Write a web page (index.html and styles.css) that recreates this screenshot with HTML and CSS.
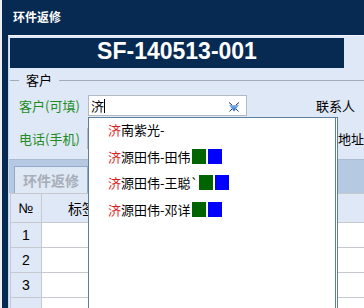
FILE: index.html
```html
<html>
	<head>
		<title>环件返修</title>
		<link rel="stylesheet" href="styles.css">
	</head>
	<body>
		<div id="window">
			<div class="titlebar">环件返修</div>
			<div class="panel">
				<div class="docno">SF-140513-001</div>
				<div class="group">
					<div class="legend"><span>客户</span></div>
					<div class="field-row">
						<label class="req">客户(可填)</label>
						<div class="combo">
							<span class="value">济</span><span class="caret"></span>
							<svg class="clear" width="12" height="10" viewBox="0 0 12 10">
								<defs>
									<linearGradient id="blue" x1="0" y1="0" x2="0" y2="1">
										<stop offset="0" stop-color="#8cbcf4" />
										<stop offset="1" stop-color="#1c58c4" />
									</linearGradient>
								</defs>
								<polygon points="1,3 11,3 6,9.5" fill="url(#blue)" />
								<path d="M1 0.5 L4 3 M11 0.5 L8 3 M1.5 9.5 L4 7 M10.5 9.5 L8 7" stroke="#24344c" stroke-width="1" />
							</svg>
						</div>
						<label class="side">联系人</label>
					</div>
					<div class="field-row">
						<label class="req">电话(手机)</label>
						<div class="combo plain"></div>
						<label class="side addr"><i class="bar"></i>地址</label>
					</div>
				</div>
				<div class="tabstrip">
					<div class="tab">环件返修</div>
				</div>
				<table class="grid">
					<tr>
						<th class="num">№</th>
						<th class="tag">标签</th>
						<th></th>
					</tr>
					<tr><td class="num">1</td><td></td><td></td></tr>
					<tr><td class="num">2</td><td></td><td></td></tr>
					<tr><td class="num">3</td><td></td><td></td></tr>
					<tr><td class="num"></td><td></td><td></td></tr>
				</table>
			</div>
		</div>
		<ul class="suggest">
			<li><em>济</em>南紫光-</li>
			<li><em>济</em>源田伟-田伟<span class="sw green"></span><span class="sw blue"></span></li>
			<li><em>济</em>源田伟-王聪`<span class="sw green"></span><span class="sw blue"></span></li>
			<li><em>济</em>源田伟-邓详<span class="sw green"></span><span class="sw blue"></span></li>
		</ul>
	</body>
</html>
```

FILE: styles.css
```css
body {
	margin: 0;
	position: relative;
	height: 308px;
	overflow: hidden;
	background: #eef0f3;
	font: 13px "Noto Sans CJK SC", "Liberation Sans", sans-serif;
	color: #000;
}
#window {
	margin-left: 2px;
	height: 308px;
	background: #072a52;
	overflow: hidden;
}
.titlebar {
	height: 35px;
	line-height: 34px;
	padding-left: 11px;
	color: #fff;
	font-weight: bold;
	font-size: 12px;
}
.panel {
	margin-left: 6px;
	height: 273px;
	border-left: 1px solid #c9d6e8;
	border-top: 1px solid #f2f6fc;
	background: #dfe8f6;
	padding-top: 2px;
	box-sizing: border-box;
}
.docno {
	margin-left: 1px;
	width: 334px;
	height: 30px;
	line-height: 30px;
	background: #072a52;
	color: #fff;
	text-align: center;
	font: bold 23px "Liberation Sans", sans-serif;
}
.group {
	margin-top: 4px;
	padding-bottom: 10px;
}
.legend {
	display: flex;
	align-items: center;
	height: 16px;
	margin-left: 1px;
}
.legend::before,
.legend::after {
	content: "";
	height: 1px;
	background: #a3adb9;
}
.legend::before {
	width: 9px;
}
.legend::after {
	flex: 1;
}
.legend span {
	padding: 0 7px;
	line-height: 16px;
}
.field-row {
	display: flex;
	align-items: center;
	height: 21px;
	padding-left: 10px;
	margin-top: 7px;
	white-space: nowrap;
}
.field-row + .field-row {
	margin-top: 12px;
}
.req {
	width: 69px;
	color: #1e8c1e;
	line-height: 21px;
}
.combo {
	display: flex;
	align-items: center;
	width: 159px;
	height: 21px;
	box-sizing: border-box;
	border: 1px solid #b4b8c0;
	background: #fff;
	padding-left: 2px;
}
.combo .value {
	line-height: 18px;
}
.caret {
	width: 1px;
	height: 14px;
	background: #000;
}
.clear {
	margin-left: auto;
	margin-right: 6px;
	margin-top: 3px;
}
.side {
	margin-left: 69px;
	line-height: 21px;
}
.addr {
	margin-left: 92px;
	display: flex;
	align-items: center;
}
.bar {
	width: 1px;
	height: 13px;
	background: #333;
	margin-right: 1px;
}
.tabstrip {
	display: flex;
	align-items: flex-end;
	height: 34px;
	box-sizing: border-box;
	border-top: 1px solid #a9bcd4;
	background: #b6c9e2;
	padding-left: 5px;
}
.tab {
	width: 74px;
	height: 27px;
	box-sizing: border-box;
	border: 1px solid #93aac8;
	border-bottom: none;
	background: #dfe8f5;
	color: #a7aeb8;
	font-weight: bold;
	font-size: 14px;
	line-height: 26px;
	text-align: center;
}
.grid {
	margin-left: 1px;
	width: 400px;
	border-collapse: collapse;
	background: #fff;
}
.grid th,
.grid td {
	border: 1px solid #c6c9ce;
	height: 25px;
	padding: 0;
	font-weight: normal;
	font-size: 14px;
}
.grid th {
	height: 29px;
	background: #dfe8f6;
}
.grid .num {
	width: 30px;
	background: #dfe8f6;
	text-align: center;
	font-family: "Liberation Sans", sans-serif;
}
.grid .tag {
	width: 80px;
}
.suggest {
	position: absolute;
	left: 88px;
	top: 117px;
	width: 250px;
	height: 200px;
	margin: 0;
	padding: 0;
	box-sizing: border-box;
	list-style: none;
	background: #fff;
	border: 1px solid #5f7f9e;
	border-right: 3px double #5f7f9e;
}
.suggest li {
	display: flex;
	align-items: center;
	height: 26.7px;
	padding-left: 19px;
	position: relative;
	top: -2px;
}
.suggest em {
	font-style: normal;
	color: #e01c1c;
}
.sw {
	width: 14px;
	height: 15px;
	margin-left: 2px;
}
.sw:first-of-type {
	margin-left: 1px;
}
.green {
	background: #006400;
}
.blue {
	background: #0000ff;
}
```
